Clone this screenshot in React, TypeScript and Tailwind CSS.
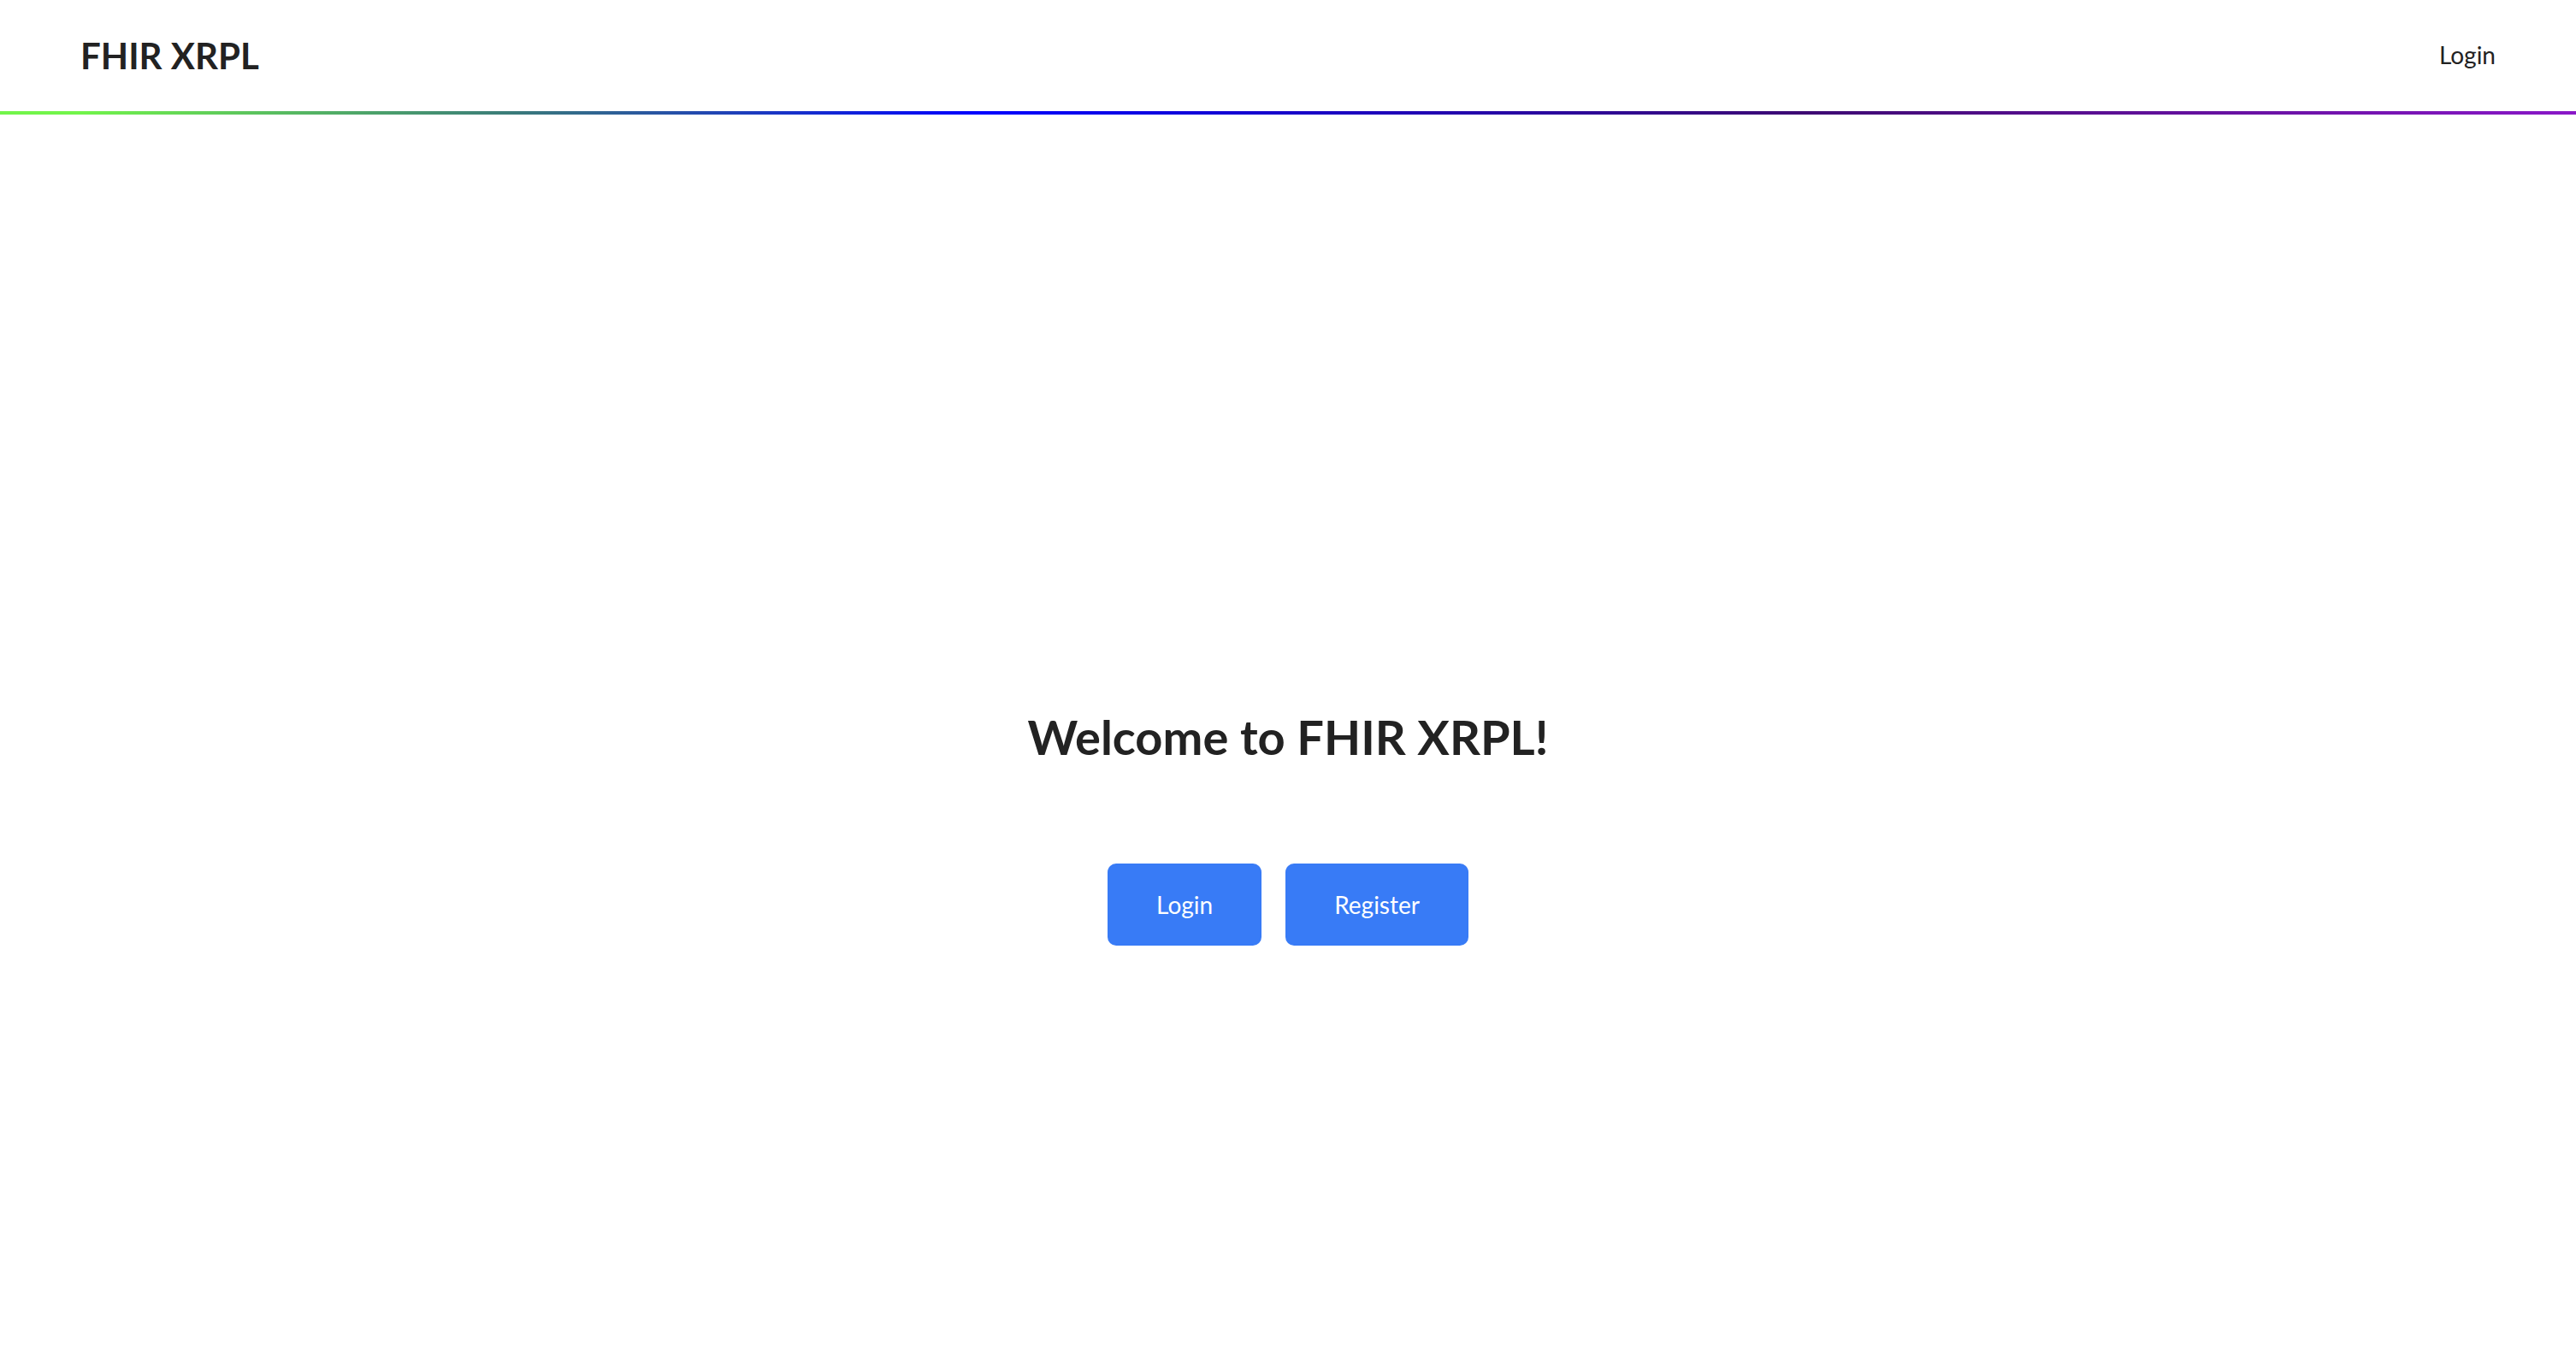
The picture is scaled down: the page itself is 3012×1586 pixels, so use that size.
import React from "react";

export default function App() {
  return (
    <div className="min-h-screen bg-white text-[#222222]" style={{ fontFamily: "Lato, 'Noto Sans', sans-serif" }}>
      <header className="flex h-[130px] items-center justify-between pl-[94px] pr-[94px]">
        <div className="text-[42px] font-bold leading-none">FHIR XRPL</div>
        <nav>
          <a href="#" className="text-[28px] leading-none text-[#222222]">Login</a>
        </nav>
      </header>
      <div className="h-[4px] w-full bg-[linear-gradient(to_right,#72f54a_3%,#3a7a7a_20%,#0000ff_38%,#3d0a72_70%,#8a18c8_100%)]" />
      <main className="flex flex-col items-center pt-[694px]">
        <h1 className="text-[56px] font-bold leading-[1.2]">Welcome to FHIR XRPL!</h1>
        <div className="mt-[115px] flex gap-[28px]">
          <button className="flex h-[96px] items-center rounded-[10px] bg-[#387bf6] px-[57px] text-[28px] text-white">Login</button>
          <button className="flex h-[96px] items-center rounded-[10px] bg-[#387bf6] px-[57px] text-[28px] text-white">Register</button>
        </div>
      </main>
    </div>
  );
}
